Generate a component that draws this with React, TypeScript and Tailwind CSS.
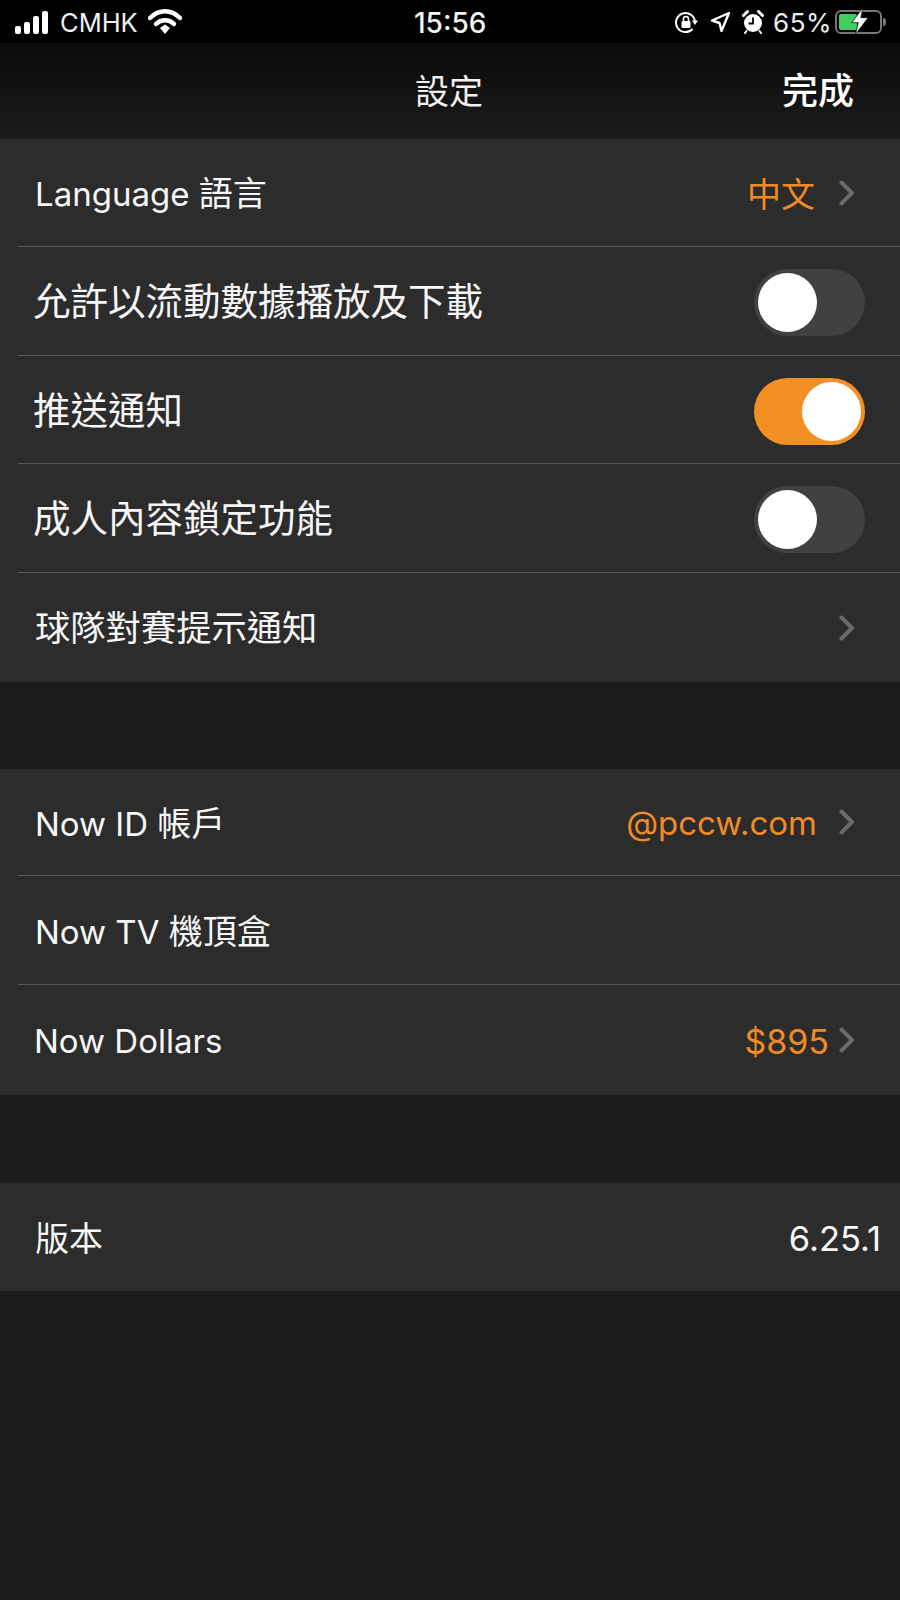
const CJK = 'font-["Inter","Noto_Sans_CJK_TC",sans-serif]';

function Chevron() {
  return (
    <svg width="16" height="26" viewBox="0 0 16 26" fill="none" className="shrink-0">
      <path d="M2.5 2.5 L13 13 L2.5 23.5" stroke="#6a6a6c" strokeWidth="4" strokeLinecap="round" strokeLinejoin="round" />
    </svg>
  );
}

function Toggle({ on }: { on?: boolean }) {
  return (
    <div className={`w-[111px] h-[67px] rounded-full p-[4px] flex ${on ? 'bg-[#f39024] justify-end' : 'bg-[#414144] justify-start'}`}>
      <div className="w-[59px] h-[59px] rounded-full bg-white" />
    </div>
  );
}

function Row({
  label,
  labelClass,
  right,
  last,
  height,
}: {
  label: React.ReactNode;
  labelClass: string;
  right?: React.ReactNode;
  last?: boolean;
  height: string;
}) {
  return (
    <div className="pl-[18px]">
      <div className={`flex items-center justify-between ${height} ${last ? '' : 'border-b border-[#58585a]'}`}>
        <span className={`whitespace-nowrap text-[#f6f6f6] pt-[3px] ${labelClass}`}>{label}</span>
        {right}
      </div>
    </div>
  );
}

function OrangeValue({ text, className }: { text: string; className: string }) {
  return (
    <div className="flex items-center pr-[45px]">
      <span className={`text-[#f08a24] pt-[3px] ${className}`}>{text}</span>
      <Chevron />
    </div>
  );
}

function StatusBar() {
  return (
    <div className="h-[43px] bg-black flex items-center justify-between pl-[15px] pr-[14px] text-white relative">
      <div className="flex items-center">
        <div className="flex items-end gap-[3px] h-[24px]">
          <div className="w-[6px] h-[8px] rounded-[2px] bg-white" />
          <div className="w-[6px] h-[12px] rounded-[2px] bg-white" />
          <div className="w-[6px] h-[18px] rounded-[2px] bg-white" />
          <div className="w-[6px] h-[23px] rounded-[2px] bg-white" />
        </div>
        <span className="ml-[12px] pt-[2px] text-[25.5px] leading-none font-['Inter'] text-[#f0f0f0]">CMHK</span>
        <svg width="34" height="26" viewBox="0 0 34 26" className="ml-[10px]" fill="none">
          <path d="M2 9 C11 0 23 0 32 9" stroke="white" strokeWidth="4.5" strokeLinecap="round" />
          <path d="M8 15 C13 10 21 10 26 15" stroke="white" strokeWidth="4.5" strokeLinecap="round" />
          <path d="M12 19 L17 15.5 L22 19 L17 25 Z" fill="white" />
        </svg>
      </div>
      <span className="absolute left-[414px] top-[7px] text-[28px] leading-[32px] font-medium font-['Inter'] text-[#f4f4f4]">15:56</span>
      <div className="flex items-center">
        <svg width="24" height="24" viewBox="0 0 24 24" fill="none" className="mr-[12px]">
          <path d="M21 12 A9.5 9.5 0 1 0 18.5 19" stroke="white" strokeWidth="2" />
          <path d="M18 10.5 L24 10.5 L21 15 Z" fill="white" />
          <rect x="7.5" y="11" width="9" height="7" rx="1" fill="white" />
          <path d="M9.5 11 V9 A2.5 2.5 0 0 1 14.5 9 V11" stroke="white" strokeWidth="1.6" />
        </svg>
        <svg width="21" height="22" viewBox="0 0 21 22" fill="none" className="mr-[11px]">
          <path d="M19 2 L11.5 20 L9.5 12 L2 9.5 Z" stroke="white" strokeWidth="2.4" strokeLinejoin="round" />
        </svg>
        <svg width="22" height="24" viewBox="0 0 22 24" fill="none" className="mr-[9px]">
          <circle cx="11" cy="13" r="9" fill="white" />
          <path d="M11 7.5 V13.5 H6.5" stroke="black" strokeWidth="1.8" />
          <path d="M1.5 5.5 L5.5 1.5 M20.5 5.5 L16.5 1.5" stroke="white" strokeWidth="3" strokeLinecap="round" />
          <path d="M4.5 21 L3 23 M17.5 21 L19 23" stroke="white" strokeWidth="2" strokeLinecap="round" />
        </svg>
        <span className="pt-[2px] text-[26px] leading-none font-['Inter'] text-[#eeeeee] tracking-[0.5px]">65%</span>
        <div className="relative ml-[3px] w-[47px] h-[24px] rounded-[6px] border-[2px] border-[#77777a] p-[2px]">
          <div className="w-[18px] h-full rounded-[2px] bg-[#3ecf5e]" />
          <svg width="20" height="28" viewBox="0 0 22 34" className="absolute left-[13px] -top-[5px]" preserveAspectRatio="none">
            <path d="M14 1 L2 19 L9 19 L6 33 L20 13 L12 13 Z" fill="white" stroke="black" strokeWidth="0.8" />
          </svg>
        </div>
        <div className="ml-[1px] w-[3px] h-[8px] rounded-r-full bg-[#77777a]" />
      </div>
    </div>
  );
}

export default function App() {
  return (
    <div className={`w-[900px] h-[1600px] bg-[#1c1c1c] overflow-hidden ${CJK}`}>
      <StatusBar />
      <div className="h-[96px] bg-gradient-to-b from-[#0b0b0b] to-[#1b1b1b] relative">
        <span className="absolute left-[415px] top-[27px] text-[34px] leading-[44px] text-[#f0f0f0]">設定</span>
        <span className="absolute left-[782px] top-[25px] text-[36px] leading-[46px] font-medium text-white">完成</span>
      </div>

      <div className="bg-[#2c2c2d]">
        <Row
          height="h-[108px]"
          label={<>Language <span className="text-[34px]">語言</span></>}
          labelClass="pl-[17px] text-[33px]"
          right={<OrangeValue text="中文" className="text-[34px] mr-[24px]" />}
        />
        <Row
          height="h-[109px]"
          label="允許以流動數據播放及下載"
          labelClass="pl-[15px] text-[37.5px]"
          right={<div className="pr-[35px] pt-[2px]"><Toggle /></div>}
        />
        <Row
          height="h-[108px]"
          label="推送通知"
          labelClass="pl-[15px] text-[37.5px]"
          right={<div className="pr-[35px] pt-[3px]"><Toggle on /></div>}
        />
        <Row
          height="h-[109px]"
          label="成人內容鎖定功能"
          labelClass="pl-[15px] text-[37.5px]"
          right={<div className="pr-[35px] pt-[3px]"><Toggle /></div>}
        />
        <Row
          height="h-[109px]"
          last
          label="球隊對賽提示通知"
          labelClass="pl-[17px] text-[35.3px]"
          right={<div className="pr-[45px]"><Chevron /></div>}
        />
      </div>

      <div className="mt-[87px] bg-[#2c2c2d]">
        <Row
          height="h-[107px]"
          label={<>Now ID <span className="text-[34px]">帳戶</span></>}
          labelClass="pl-[17px] text-[33px]"
          right={<OrangeValue text="@pccw.com" className="text-[33px] mr-[22px]" />}
        />
        <Row
          height="h-[109px]"
          label={<>Now TV <span className="text-[34px]">機頂盒</span></>}
          labelClass="pl-[17px] text-[33px]"
        />
        <Row
          height="h-[110px]"
          last
          label="Now Dollars"
          labelClass="pl-[16px] text-[33px]"
          right={<OrangeValue text="$895" className="text-[34px] mr-[10px]" />}
        />
      </div>

      <div className="mt-[88px] bg-[#2c2c2d]">
        <Row
          height="h-[108px]"
          last
          label="版本"
          labelClass="pl-[17px] text-[34px]"
          right={<span className="pr-[19px] pt-[3px] text-[34.5px] text-[#f6f6f6]">6.25.1</span>}
        />
      </div>
    </div>
  );
}
